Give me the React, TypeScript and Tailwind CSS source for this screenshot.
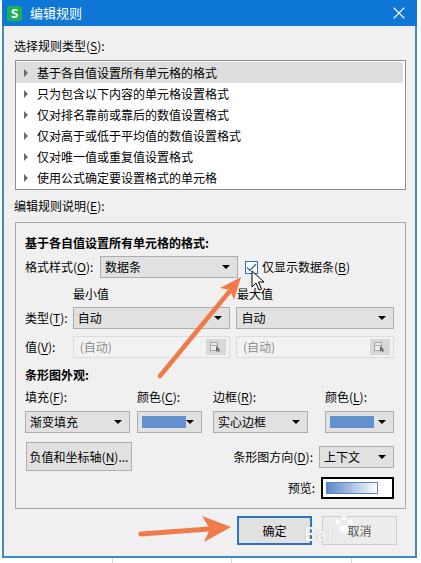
import { X } from 'lucide-react';
import type { ReactNode } from 'react';

const ruleTypes = [
  '基于各自值设置所有单元格的格式',
  '只为包含以下内容的单元格设置格式',
  '仅对排名靠前或靠后的数值设置格式',
  '仅对高于或低于平均值的数值设置格式',
  '仅对唯一值或重复值设置格式',
  '使用公式确定要设置格式的单元格',
];

const Caret = () => (
  <span className="w-0 h-0 border-l-[4px] border-r-[4px] border-t-[4px] border-l-transparent border-r-transparent border-t-black" />
);

// 带下划线的快捷键字母
const Key = ({ k }: { k: string }) => <span className="underline underline-offset-2">{k}</span>;

const Combo = ({ className, children }: { className: string; children: ReactNode }) => (
  <div className={`flex items-center h-[22px] border border-[#adadad] bg-[#e1e1e1] pl-[4px] pr-[7px] ${className}`}>
    <div className="flex-1 flex items-center">{children}</div>
    <Caret />
  </div>
);

const Swatch = () => <div className="w-[44px] h-[12px] bg-[#6590cf]" />;

const DisabledInput = () => (
  <div className="flex items-center w-[158px] h-[22px] border border-[#dcdcdc] bg-[#f2f2f2] pl-[6px] pr-[3px]">
    <span className="flex-1 text-[#8c8c8c]">(自动)</span>
    <div className="w-[20px] h-[16px] bg-[#d8d8d8] flex items-center justify-center">
      <svg width="12" height="10" viewBox="0 0 12 10">
        <rect x="0.5" y="0.5" width="7" height="8" fill="#ececec" stroke="#a8a8a8" />
        <line x1="0.5" y1="3.5" x2="7.5" y2="3.5" stroke="#a8a8a8" />
        <path d="M6 4 L6 10 L7.5 8.5 L9 10.5 L10 10 L8.7 8 L10.5 8 Z" fill="#6b6b6b" />
      </svg>
    </div>
  </div>
);

const App = () => (
  <div className="relative w-[421px] h-[563px] bg-white overflow-hidden text-[12px] leading-[16px] text-black font-['Noto_Sans_CJK_SC','Noto_Sans',sans-serif]">
    <div className="ml-[2px] w-[415px] h-[558px] border-x-2 border-b-2 border-[#3d8ac4] bg-[#f0f0f0] flex flex-col">
      {/* 标题栏 */}
      <div className="h-[26px] bg-[#0f78d6] flex items-center -mx-[2px] px-[5px] shrink-0">
        <div className="w-[15px] h-[15px] rounded-[3px] bg-[#1db153] flex items-center justify-center text-white text-[12px] font-bold leading-none">
          S
        </div>
        <span className="ml-[8px] text-white text-[13px]">编辑规则</span>
        <X size={20} strokeWidth={1.3} className="ml-auto mr-[3px] text-white" />
      </div>

      <div className="pl-[10px] mt-[12px]">
        选择规则类型(<Key k="S" />):
      </div>

      <div className="ml-[11px] w-[391px] h-[130px] mt-[6px] border border-[#8f8f8f] bg-white py-[1px] flex flex-col">
        {ruleTypes.map((t, i) => (
          <div
            key={t}
            className={`h-[21px] flex items-center w-[387px] ${i === 0 ? 'bg-[#dedede]' : ''}`}
          >
            <span className="ml-[8px] w-0 h-0 border-t-[4px] border-b-[4px] border-l-[4px] border-t-transparent border-b-transparent border-l-[#6b6b6b]" />
            <span className="ml-[9px]">{t}</span>
          </div>
        ))}
      </div>

      <div className="pl-[10px] mt-[8px]">
        编辑规则说明(<Key k="E" />):
      </div>

      {/* 规则说明分组 */}
      <div className="ml-[11px] w-[391px] mt-[8px] border border-[#a7a7a7] pl-[9px] pr-[11px] pt-[12px] pb-[9px] flex flex-col">
        <div className="font-bold">基于各自值设置所有单元格的格式:</div>

        <div className="flex items-center mt-[5px]">
          <span className="w-[75px]">
            格式样式(<Key k="O" />):
          </span>
          <Combo className="w-[138px]">数据条</Combo>
          <div className="ml-[7px] w-[13px] h-[13px] border border-[#2f6fae] bg-white flex items-center justify-center">
            <svg width="11" height="9" viewBox="0 0 11 9">
              <polyline points="1,4.5 4,7.5 10,1" fill="none" stroke="#2f6fae" strokeWidth="1.4" />
            </svg>
          </div>
          <span className="ml-[4px]">
            仅显示数据条(<Key k="B" />)
          </span>
        </div>

        <div className="flex mt-[8px]">
          <span className="w-[48px]" />
          <span className="w-[164px]">最小值</span>
          <span>最大值</span>
        </div>

        <div className="flex items-center mt-[5px]">
          <span className="w-[48px]">
            类型(<Key k="T" />):
          </span>
          <Combo className="w-[158px]">自动</Combo>
          <Combo className="w-[158px] ml-[6px]">自动</Combo>
        </div>

        <div className="flex items-center mt-[7px]">
          <span className="w-[48px]">
            值(<Key k="V" />):
          </span>
          <DisabledInput />
          <div className="ml-[6px]">
            <DisabledInput />
          </div>
        </div>

        <div className="font-bold mt-[9px]">条形图外观:</div>

        <div className="flex mt-[6px]">
          <span className="w-[112px]">
            填充(<Key k="F" />):
          </span>
          <span className="w-[76px]">
            颜色(<Key k="C" />):
          </span>
          <span className="w-[112px]">
            边框(<Key k="R" />):
          </span>
          <span>
            颜色(<Key k="L" />):
          </span>
        </div>

        <div className="flex items-center mt-[6px]">
          <Combo className="w-[105px]">渐变填充</Combo>
          <Combo className="w-[65px] ml-[7px]">
            <Swatch />
          </Combo>
          <Combo className="w-[95px] ml-[11px]">实心边框</Combo>
          <Combo className="w-[69px] ml-[17px]">
            <Swatch />
          </Combo>
        </div>

        <div className="flex items-center mt-[9px]">
          <div className="ml-[1px] w-[106px] h-[29px] border border-[#adadad] bg-[#e1e1e1] flex items-center justify-center">
            负值和坐标轴(<Key k="N" />)...
          </div>
          <span className="ml-auto">
            条形图方向(<Key k="D" />):
          </span>
          <Combo className="w-[75px] ml-[6px]">上下文</Combo>
        </div>

        <div className="flex items-center justify-end mt-[6px]">
          <span>预览:</span>
          <div className="ml-[6px] w-[73px] h-[22px] border-2 border-black bg-white flex items-center pl-[3px]">
            <div className="w-[52px] h-[12px] border border-[#5d83c2] bg-[linear-gradient(90deg,#5a86c8,#ffffff)]" />
          </div>
        </div>
      </div>

      {/* 底部按钮 */}
      <div className="flex justify-end gap-[10px] pr-[18px] mt-[7px]">
        <div className="w-[75px] h-[29px] border-2 border-[#2a74bb] bg-[#e1e1e1] flex items-center justify-center">
          确定
        </div>
        <div className="w-[75px] h-[29px] border border-[#cccccc] bg-[#ececec] flex items-center justify-center text-[#555]">
          取消
        </div>
      </div>
    </div>

    {/* 下方表格网格 */}
    <div className="h-[5px] flex">
      <div className="w-[113px] border-r border-[#d6d6d6]" />
      <div className="w-[119px] border-r border-[#d6d6d6]" />
      <div className="w-[120px] border-r border-[#d6d6d6]" />
    </div>

    {/* 水印 */}
    <div className="absolute left-[304px] top-[524px] text-white/90 font-bold text-[18px] leading-none [text-shadow:0_0_1px_#a0a0a0] pointer-events-none">
      Bai
    </div>

    {/* 标注箭头与鼠标指针 */}
    <svg className="absolute inset-0 pointer-events-none" width="421" height="563" viewBox="0 0 421 563">
      <g fill="white" opacity="0.85">
        <circle cx="338" cy="522" r="2.5" />
        <circle cx="344" cy="518" r="2.5" />
        <circle cx="350" cy="522" r="2.5" />
        <ellipse cx="344" cy="529" rx="5" ry="4" />
      </g>
      <line x1="160" y1="376" x2="229" y2="292" stroke="#ef7a4a" strokeWidth="4.5" strokeLinecap="round" />
      <polygon points="241,277 234,300 230,290 220,288" fill="#ef7a4a" />
      <line x1="141" y1="534" x2="209" y2="529" stroke="#ef7a4a" strokeWidth="5" strokeLinecap="round" />
      <polygon points="231,527 204,542 210,529 202,516" fill="#ef7a4a" />
      <path
        d="M252 271 L252 287 L256 283 L259 290 L261.5 289 L258.5 282 L264 282 Z"
        fill="white"
        stroke="black"
        strokeWidth="1"
        strokeLinejoin="round"
      />
    </svg>
  </div>
);

export default App;
